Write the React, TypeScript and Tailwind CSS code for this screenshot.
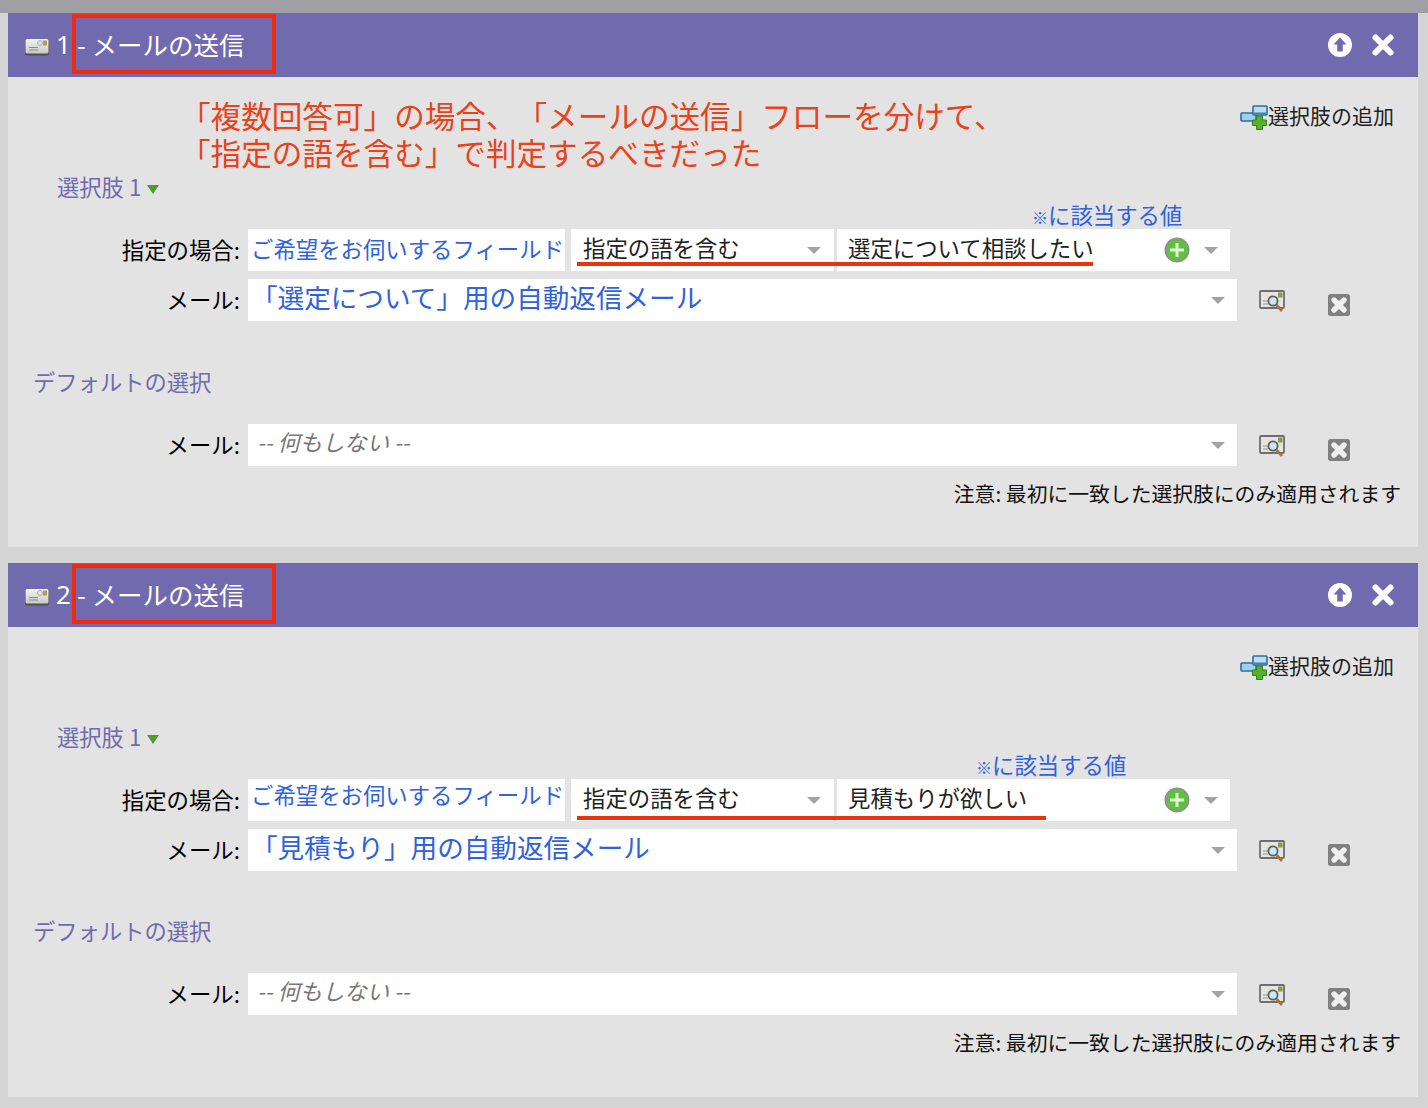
import React from "react";

const FONT = "font-['Noto_Sans_CJK_JP','Noto_Sans',sans-serif]";

function MailIcon() {
  return (
    <svg width="26" height="19" viewBox="0 0 26 19" aria-hidden>
      <defs>
        <linearGradient id="mailBg" x1="0" y1="0" x2="0" y2="1">
          <stop offset="0" stopColor="#f4f4f0" />
          <stop offset="1" stopColor="#c9c9c4" />
        </linearGradient>
      </defs>
      <rect x="1" y="2" width="24" height="16.5" rx="2" fill="#4f4f55" />
      <rect x="1.5" y="2" width="23" height="14.5" rx="1.5" fill="url(#mailBg)" />
      <rect x="19" y="3.5" width="4" height="5" fill="#a5a35a" />
      <circle cx="16" cy="6" r="2.4" fill="none" stroke="#a8a8a4" />
      <path d="M5 10.5h9M5 13h9" stroke="#8a8a88" strokeWidth="1" />
    </svg>
  );
}

function UpCircle() {
  return (
    <svg width="26" height="26" viewBox="0 0 26 26" aria-hidden>
      <circle cx="13" cy="13" r="12" fill="#fff" />
      <path d="M13 5.5 L19.5 12.5 H15.8 V19.5 H10.2 V12.5 H6.5 Z" fill="#716aaf" />
    </svg>
  );
}

function WhiteX() {
  return (
    <svg width="24" height="24" viewBox="0 0 24 24" aria-hidden>
      <path d="M4.5 4.5 L19.5 19.5 M19.5 4.5 L4.5 19.5" stroke="#fff" strokeWidth="6" strokeLinecap="round" />
    </svg>
  );
}

function AddChoiceIcon() {
  return (
    <svg width="28" height="25" viewBox="0 0 28 25" aria-hidden>
      <rect x="1" y="8" width="15" height="8" rx="1" fill="#9fd0ee" stroke="#2c6f9f" strokeWidth="1.6" />
      <rect x="13" y="1" width="14" height="9" rx="1" fill="#b9ddf3" stroke="#2c6f9f" strokeWidth="1.6" />
      <rect x="13" y="7.5" width="13" height="2" fill="#3c83b5" />
      <path d="M16.5 11 h6 v4 h4 v5.5 h-4 v4 h-6 v-4 h-4 V15 h4 Z" fill="#58b030" stroke="#357f1c" strokeWidth="1" />
    </svg>
  );
}

function GreenPlus() {
  return (
    <svg width="26" height="26" viewBox="0 0 26 26" aria-hidden>
      <circle cx="13" cy="13" r="12.5" fill="#8b938a" />
      <circle cx="13" cy="13" r="10.5" fill="#60c040" />
      <path d="M13 6 V20 M6 13 H20" stroke="#dff5d5" strokeWidth="3" />
    </svg>
  );
}

function Caret() {
  return <span className="h-0 w-0 border-x-[7px] border-t-[7px] border-x-transparent border-t-[#a3a3a3]" />;
}

function PreviewIcon() {
  return (
    <svg width="27" height="23" viewBox="0 0 27 23" aria-hidden>
      <rect x="1" y="1" width="24" height="17" rx="1" fill="#e4e4e1" stroke="#6e6e72" strokeWidth="1.8" />
      <rect x="19" y="2.5" width="4.5" height="5" fill="#8d9a45" />
      <path d="M4 11h6M4 14h5" stroke="#999" />
      <circle cx="14" cy="11" r="4.6" fill="#cfe6f2" stroke="#5f5f5f" strokeWidth="1.8" />
      <path d="M17.5 15 L23 21" stroke="#a9743a" strokeWidth="2.8" />
    </svg>
  );
}

function GrayX() {
  return (
    <svg width="24" height="24" viewBox="0 0 24 24" aria-hidden>
      <rect x="1" y="1" width="22" height="22" rx="2.5" fill="#808080" />
      <path d="M7 7 L17 17 M17 7 L7 17" stroke="#efefef" strokeWidth="5.4" strokeLinecap="round" />
    </svg>
  );
}

function Label({ children }: { children: React.ReactNode }) {
  return <div className="w-[232px] shrink-0 pb-[1px] text-right text-[22.4px] text-black">{children}</div>;
}

function MailRow({ value, placeholder, className }: { value: string; placeholder?: boolean; className: string }) {
  return (
    <div className={`flex items-center gap-2 ${className}`}>
      <Label>メール:</Label>
      <div className="flex h-[42px] w-[989px] items-center justify-between bg-white pr-[12px]">
        {placeholder ? (
          <span className="pb-[6px] pl-[9px] text-[22.3px] italic text-[#777]">{value}</span>
        ) : (
          <span className="pb-[6px] pl-[3px] text-[26.6px] text-[#2f62dc]">{value}</span>
        )}
        <Caret />
      </div>
      <div className="ml-[14px] mt-[2px]">
        <PreviewIcon />
      </div>
      <div className="ml-[33px] mt-[10px]">
        <GrayX />
      </div>
    </div>
  );
}

function StepCard({
  num,
  note,
  value,
  mail,
  underlineWidth,
  underlineTop,
  hintLeft,
  fieldClass,
  defaultClass,
}: {
  num: number;
  note?: boolean;
  value: string;
  mail: string;
  underlineWidth: string;
  underlineTop: string;
  hintLeft: string;
  fieldClass: string;
  defaultClass: string;
}) {
  return (
    <section className="mx-[8px] w-[1410px]">
      <header className="relative flex h-[64px] items-center bg-[#716aaf] pl-[16px] pr-[23px] text-white">
        <div className="mt-[2px]">
          <MailIcon />
        </div>
        <span className="ml-[6px] pb-[2px] text-[26px] font-['Noto_Sans',sans-serif]">{num}</span>
        <span className="ml-[6px] pb-[2px] text-[25.5px]">- メールの送信</span>
        <div className="absolute left-[64px] top-[1px] h-[60px] w-[204px] border-[4px] border-[#f02a0e]" />
        <div className="ml-auto flex items-center gap-[18px]">
          <UpCircle />
          <WhiteX />
        </div>
      </header>

      <div className="relative h-[470px] bg-[#e3e3e3] pt-[24px]">
        {note && (
          <div className="absolute left-[172px] top-[20px] text-[30.6px] leading-[37px] text-[#e8431c]">
            「複数回答可」の場合、「メールの送信」フローを分けて、
            <br />
            「指定の語を含む」で判定するべきだった
          </div>
        )}
        <div className="flex h-[32px] items-center justify-end pr-[24px] text-[21px] text-[#222]">
          <AddChoiceIcon />
          <span className="pb-[2px]">選択肢の追加</span>
        </div>

        <div className="mt-[40px] flex h-[30px] items-center pl-[49px] text-[22.3px] text-[#716aaf]">
          <span className="pb-[3px]">選択肢 1</span>
          <span className="ml-[6px] mt-[3px] h-0 w-0 border-x-[6px] border-t-[9px] border-x-transparent border-t-[#4f9a34]" />
        </div>

        <div className="relative mt-[26px] flex items-center gap-2">
          <Label>指定の場合:</Label>
          <div className="flex h-[42px] w-[317px] bg-white">
            <span className={`whitespace-nowrap pl-[3px] text-[22.4px] text-[#2f62dc] ${fieldClass}`}>
              ご希望をお伺いするフィールド
            </span>
          </div>
          <div className="ml-[-2px] flex h-[42px] w-[263px] items-center justify-between bg-white pl-[12px] pr-[13px] text-[22.4px] text-[#222]">
            <span className="pb-[4px]">指定の語を含む</span>
            <Caret />
          </div>
          <div className="ml-[-5px] flex h-[42px] w-[393px] items-center bg-white pl-[11px] pr-[12px] text-[22.4px] text-[#222]">
            <span className="pb-[4px]">{value}</span>
            <div className="ml-auto flex items-center gap-[14px]">
              <GreenPlus />
              <Caret />
            </div>
          </div>
          <div className={`absolute left-[569px] h-[4px] bg-[#e8330f] ${underlineWidth} ${underlineTop}`} />
          <span className={`absolute top-[-31px] text-[22.4px] leading-[32px] text-[#2f62dc] ${hintLeft}`}>
            <span className="text-[16px] font-bold">※</span>に該当する値
          </span>
        </div>

        <MailRow className="mt-[8px]" value={mail} />

        <div className={`flex h-[30px] items-center pb-[3px] pl-[25px] text-[22.3px] text-[#716aaf] ${defaultClass}`}>
          デフォルトの選択
        </div>

        <MailRow className="mt-[26px]" value="-- 何もしない --" placeholder />

        <div className="mt-[13px] flex h-[30px] items-center justify-end pb-[1px] pr-[17px] text-[20.8px] text-[#111]">
          注意: 最初に一致した選択肢にのみ適用されます
        </div>
      </div>
    </section>
  );
}

export default function App() {
  return (
    <div className={`h-[1108px] w-[1428px] overflow-hidden bg-[#d4d4d4] [text-spacing-trim:space-all] ${FONT}`}>
      <div className="h-[13px] bg-[#a09fa3]" />
      <StepCard
        num={1}
        note
        value="選定について相談したい"
        mail="「選定について」用の自動返信メール"
        underlineWidth="w-[516px]"
        underlineTop="top-[33px]"
        hintLeft="left-[1024px]"
        fieldClass="leading-[38px]"
        defaultClass="mt-[47px]"
      />
      <div className="h-[16px]" />
      <StepCard
        num={2}
        value="見積もりが欲しい"
        mail="「見積もり」用の自動返信メール"
        underlineWidth="w-[469px]"
        underlineTop="top-[37px]"
        hintLeft="left-[968px]"
        fieldClass="leading-[30px]"
        defaultClass="mt-[46px]"
      />
    </div>
  );
}
